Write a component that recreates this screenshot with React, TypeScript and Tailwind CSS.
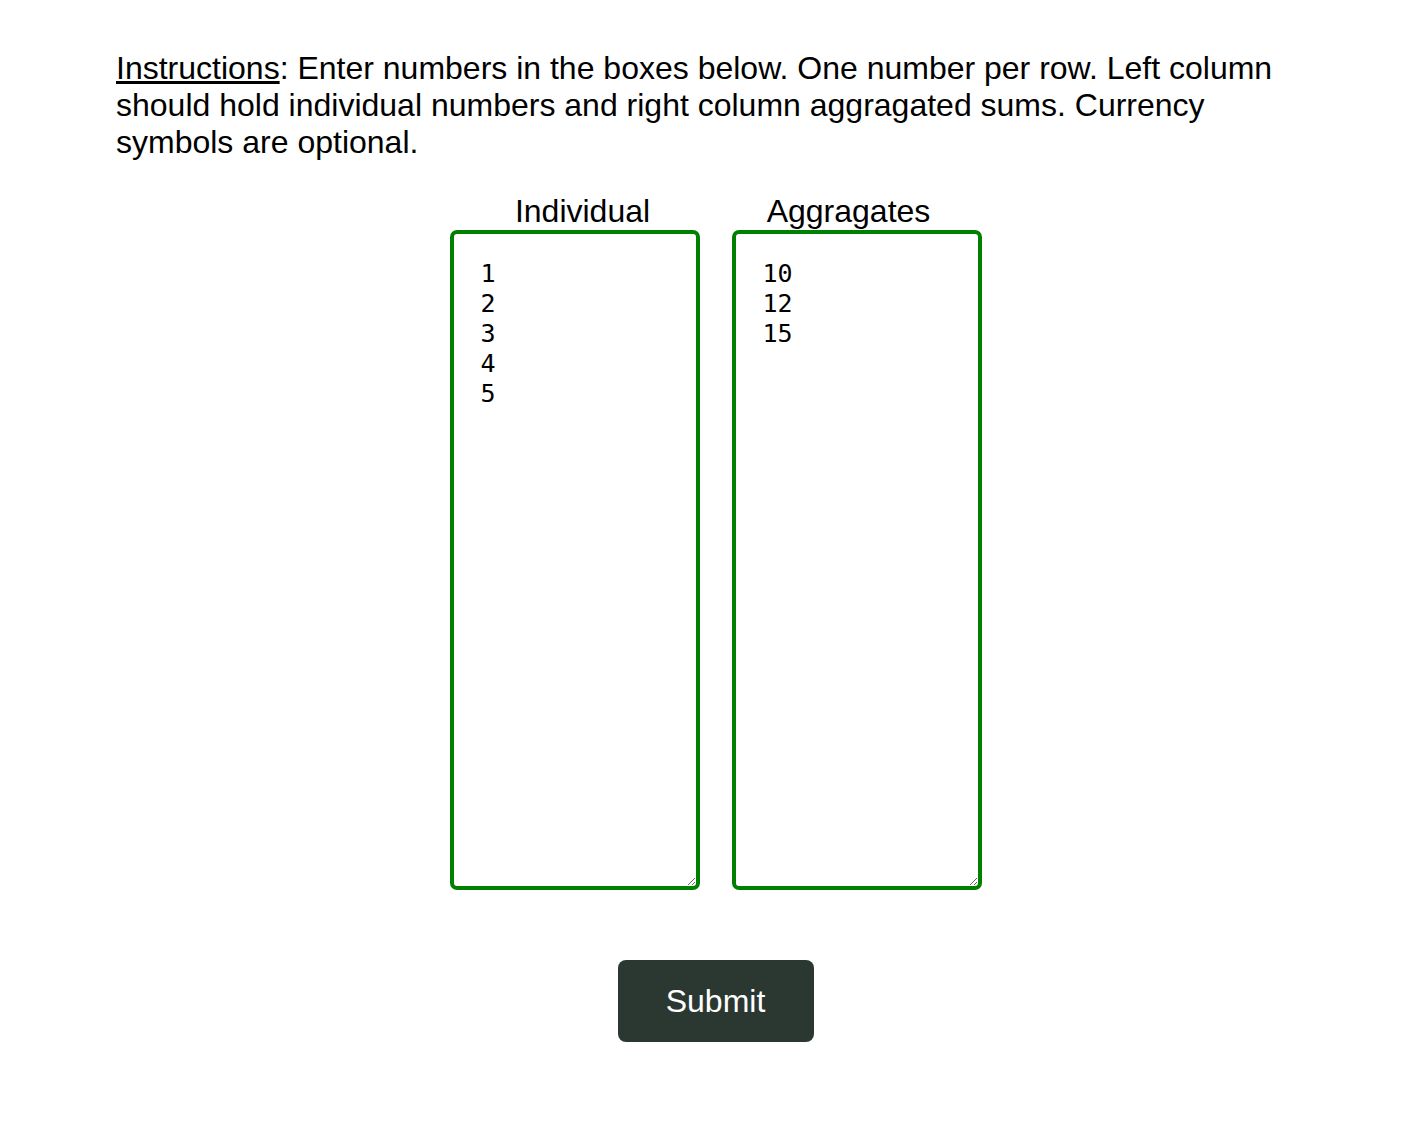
import React, { useState } from 'react';

const Column: React.FC<{ label: string; value: string; align: 'start' | 'end'; onChange: (v: string) => void }> = ({ label, value, align, onChange }) => (
  <div className="flex flex-col">
    <span className="text-center text-[32px] leading-[37px] text-black">{label}</span>
    <textarea
      value={value}
      onChange={(e) => onChange(e.target.value)}
      className={`w-[250px] h-[660px] border-4 border-[#008000] rounded-[7px] pt-[25px] pl-[27px] pr-2 font-['DejaVu_Sans_Mono',monospace] text-[25px] leading-[30px] text-black outline-none ${
        align === 'start' ? 'self-start' : 'self-end'
      }`}
    />
  </div>
);

export default function App() {
  const [individual, setIndividual] = useState('1\n2\n3\n4\n5');
  const [aggregates, setAggregates] = useState('10\n12\n15');

  return (
    <div className="bg-white min-h-[1134px] pl-[116px] pr-[87px] pt-[50px] font-['Liberation_Sans',Arial,sans-serif] text-black">
      <p className="text-[32px] leading-[37px]">
        <span className="underline">Instructions</span>: Enter numbers in the boxes below. One number per row. Left column should hold individual numbers and right column aggragated sums. Currency symbols are optional.
      </p>

      <div className="mt-[32px] flex flex-col items-center">
        <div className="grid grid-cols-[266px_266px]">
          <Column label="Individual" value={individual} align="start" onChange={setIndividual} />
          <Column label="Aggragates" value={aggregates} align="end" onChange={setAggregates} />
        </div>

        <button className="mt-[70px] w-[196px] h-[82px] rounded-[8px] bg-[#2b3832] text-white text-[32px]">
          Submit
        </button>
      </div>
    </div>
  );
}
